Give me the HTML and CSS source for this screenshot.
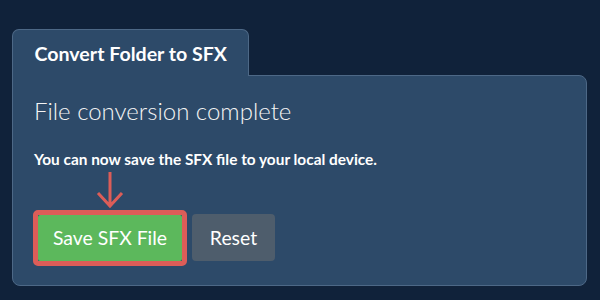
FILE: index.html
```html
<!DOCTYPE html>
<html lang="en">
<head>
    <meta charset="UTF-8">
    <title>Convert Folder to SFX</title>
    <link rel="stylesheet" href="styles.css">
</head>
<body>

    <div class="tabs">
        <div class="tab">Convert Folder to SFX</div>
    </div>

    <div class="panel">
        <h2 class="title">File conversion complete</h2>
        <p class="message">You can now save the SFX file to your local device.</p>

        <div class="actions">
            <div class="highlight">
                <!-- pointer arrow over the save button -->
                <svg class="arrow" width="30" height="38" viewBox="0 0 30 38">
                    <path d="M15 1 V35 M3 22 L15 35 L27 22" fill="none" stroke="#dc5d58" stroke-width="3"/>
                </svg>
                <button class="btn btn-save">Save SFX File</button>
            </div>
            <button class="btn btn-reset">Reset</button>
        </div>
    </div>

</body>
</html>
```

FILE: styles.css
```css
body {
    margin: 0;
    padding: 29px 13px 0 12px;
    background-color: #10223a;
    color: #ffffff;
    font-family: 'Lato', 'Liberation Sans', sans-serif;
}

.tabs {
    display: flex;
}

.tab {
    padding: 11.5px 21.5px 11px;
    font-size: 19.6px;
    font-weight: bold;
    line-height: 1.2;
    background-color: #2d4a69;
    border: 1px solid #4d6886;
    border-bottom: none;
    border-radius: 7px 7px 0 0;
    margin-bottom: -1px;
    position: relative;
    z-index: 1;
}

.panel {
    background-color: #2d4a69;
    border: 1px solid #4d6886;
    border-radius: 0 8px 8px 8px;
    padding: 21px 21px 19px 20px;
}

.title {
    margin: 0 0 0 1px;
    font-size: 24px;
    font-weight: 300;
    line-height: 1.2;
    color: #f4f4f4;
}

.message {
    margin: 22px 0 0 1px;
    font-size: 15.4px;
    font-weight: bold;
    line-height: 1.5;
}

.actions {
    display: flex;
    align-items: center;
    gap: 5px;
    margin-top: 39px;
}

.highlight {
    position: relative;
    display: flex;
    border: 5px solid #dc5d58;
    border-radius: 5px;
}

.arrow {
    position: absolute;
    left: 57px;
    top: -44px;
}

.btn {
    font-family: inherit;
    font-size: 19.4px;
    line-height: 24px;
    height: 46px;
    padding: 0;
    border: none;
    border-radius: 2px;
    color: #ffffff;
    cursor: pointer;
}

.btn-save {
    width: 144px;
    background-color: #5cb85c;
}

.btn-reset {
    width: 83px;
    height: 47px;
    border-radius: 4px;
    background-color: #4e5d6c;
}
```
